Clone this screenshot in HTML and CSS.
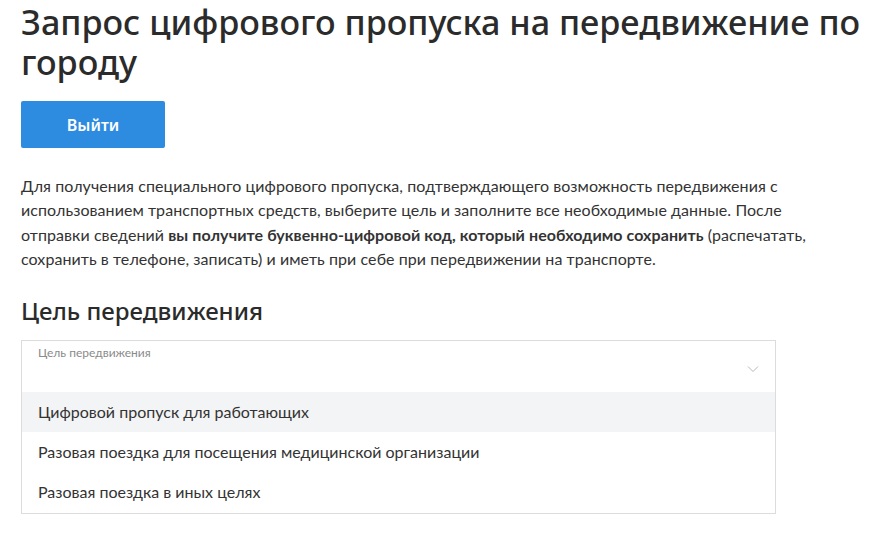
FILE: index.html
```html
<!DOCTYPE html>
<html lang="ru">
<head>
<meta charset="utf-8">
<title>Запрос цифрового пропуска</title>
<link rel="stylesheet" href="styles.css">
</head>
<body>
<main class="page">
  <h1 class="title">Запрос цифрового пропуска на передвижение по городу</h1>
  <button class="btn" type="button">Выйти</button>
  <p class="intro">Для получения специального цифрового пропуска, подтверждающего возможность передвижения с использованием транспортных средств, выберите цель и заполните все необходимые данные. После отправки сведений <b>вы получите буквенно-цифровой код, который необходимо сохранить</b> (распечатать, сохранить в телефоне, записать) и иметь при себе при передвижении на транспорте.</p>
  <h2 class="subtitle">Цель передвижения</h2>
  <div class="select">
    <div class="select-head">
      <span class="select-label">Цель передвижения</span>
      <svg class="chevron" width="12" height="8" viewBox="0 0 12 8"><polyline points="1,1.5 6,6.5 11,1.5" fill="none" stroke="#b5b8bc" stroke-width="1"/></svg>
    </div>
    <ul class="options">
      <li class="option active">Цифровой пропуск для работающих</li>
      <li class="option">Разовая поездка для посещения медицинской организации</li>
      <li class="option">Разовая поездка в иных целях</li>
    </ul>
  </div>
</main>
</body>
</html>
```
FILE: styles.css
```css
html, body {
  margin: 0;
  padding: 0;
  background: #fff;
}
.page {
  padding: 0 0 0 21px;
  font-family: Lato, "Open Sans", sans-serif;
  color: #333;
}
.title {
  font-family: "Noto Sans", "Open Sans", sans-serif;
  font-weight: 500;
  font-size: 34.2px;
  line-height: 40px;
  margin: 0;
  padding-top: 2px;
  color: #2b2b2b;
  max-width: 862px;
}
.btn {
  display: block;
  margin-top: 19px;
  width: 144px;
  height: 47px;
  border: 0;
  border-radius: 2px;
  background: #2d8be0;
  color: #fff;
  font-family: "Noto Sans", sans-serif;
  font-weight: 600;
  font-size: 16px;
  cursor: pointer;
}
.intro {
  margin: 26px 0 0;
  font-size: 16px;
  line-height: 24.3px;
  letter-spacing: 0.07px;
  max-width: 820px;
}
.intro b {
  font-weight: 700;
}
.subtitle {
  font-family: "Noto Sans", "Open Sans", sans-serif;
  font-weight: 500;
  font-size: 24px;
  line-height: 30px;
  margin: 25px 0 0;
  color: #2b2b2b;
}
.select {
  margin-top: 14px;
  border: 1px solid #dcdcdc;
  width: 753px;
}
.select-head {
  height: 51px;
  position: relative;
  padding: 0 16px;
}
.select-label {
  display: block;
  padding-top: 4px;
  font-size: 12px;
  line-height: 16px;
  color: #8a8a8a;
}
.chevron {
  position: absolute;
  right: 16px;
  top: 24px;
}
.options {
  list-style: none;
  margin: 0;
  padding: 0 0 1px;
}
.option {
  height: 40px;
  line-height: 40px;
  padding: 0 16px;
  font-size: 16px;
  color: #333;
}
.option.active {
  background: #f3f4f5;
}
```
